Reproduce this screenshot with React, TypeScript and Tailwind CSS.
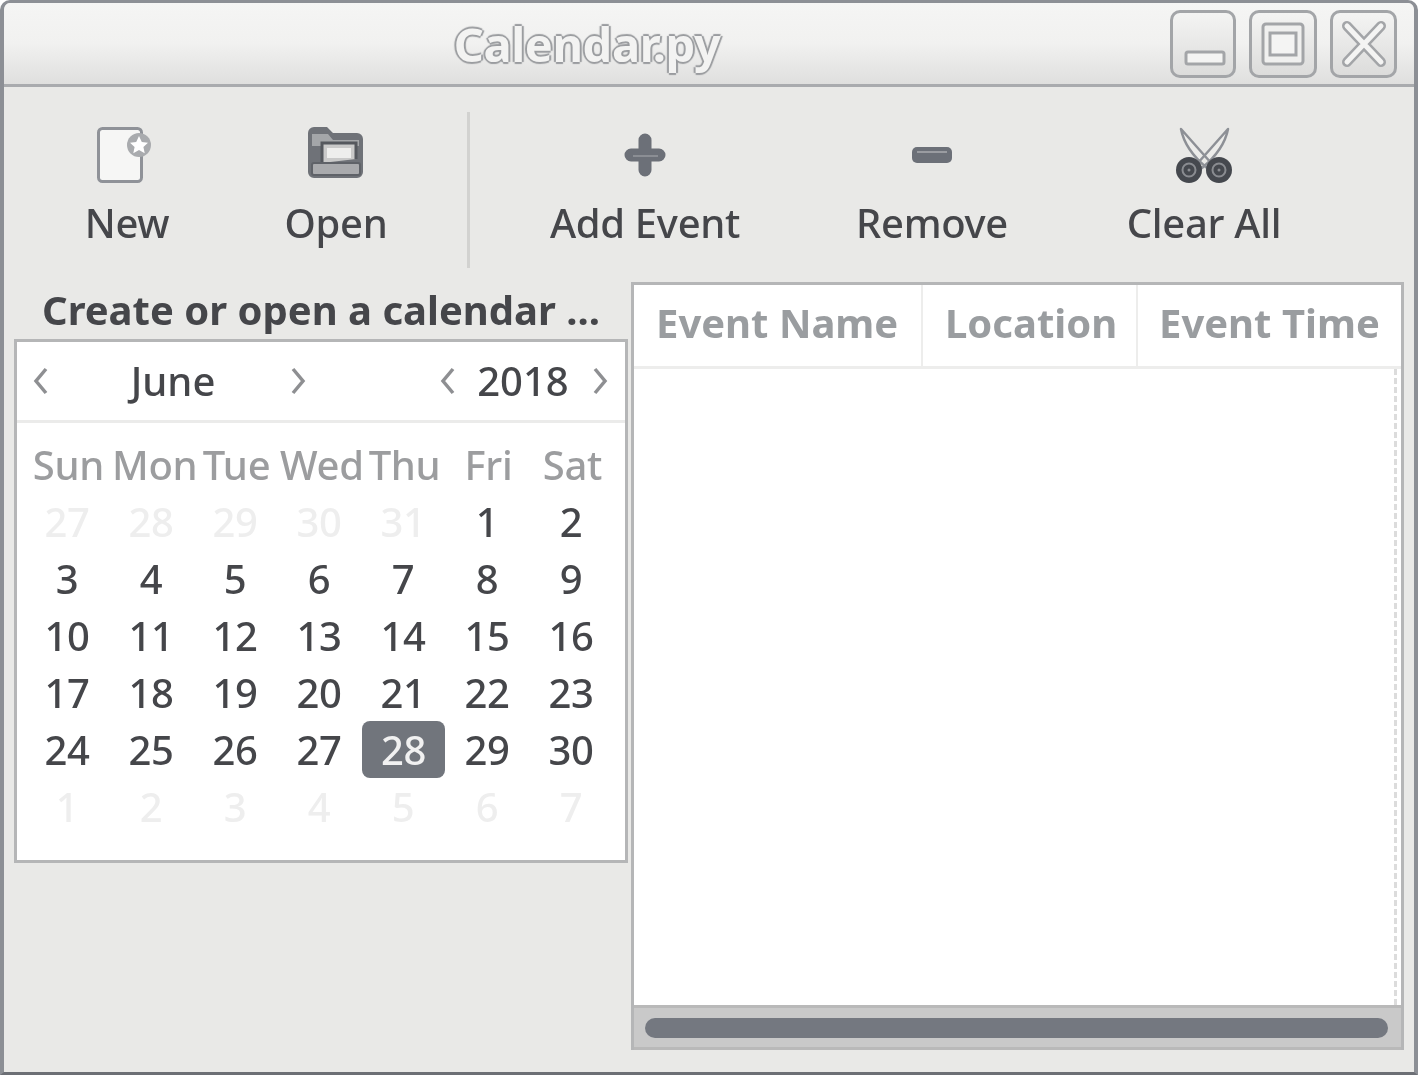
import type { ReactNode } from "react";

const weeks = [
  ["27", "28", "29", "30", "31", "1", "2"],
  ["3", "4", "5", "6", "7", "8", "9"],
  ["10", "11", "12", "13", "14", "15", "16"],
  ["17", "18", "19", "20", "21", "22", "23"],
  ["24", "25", "26", "27", "28", "29", "30"],
  ["1", "2", "3", "4", "5", "6", "7"],
];
const dayNames = ["Sun", "Mon", "Tue", "Wed", "Thu", "Fri", "Sat"];

function NewIcon() {
  return (
    <svg className="overflow-visible" width="56" height="56" viewBox="3 0 56 56" fill="none">
      <rect x="2.500" y="1.500" width="43" height="53" rx="4" fill="#f6f6f5" stroke="#8f9298" strokeWidth="3" />
      <circle cx="43" cy="18" r="12" fill="#a9abae" />
      <path d="M43 9l2.800 6 6.200.8-4.600 4.300 1.300 6.200-5.700-3.200-5.700 3.200 1.300-6.200-4.600-4.300 6.200-.8z" fill="#ffffff" />
    </svg>
  );
}

function OpenIcon() {
  return (
    <svg className="overflow-visible" width="56" height="56" viewBox="1 0 56 56" fill="none">
      <path d="M1 6a6 6 0 0 1 6-6h13l6 6h24a6 6 0 0 1 6 6v33a6 6 0 0 1-6 6H7a6 6 0 0 1-6-6z" fill="#6f7278" />
      <path d="M5 7h16l5 6h26v6H5z" fill="#a4a6a9" />
      <path d="M15 36V16h34v16" fill="#c9c9c9" stroke="#55585e" strokeWidth="3" />
      <rect x="20" y="21" width="24" height="10" fill="#eeeeed" />
      <rect x="5" y="36" width="48" height="12" rx="2" fill="#a9aaad" stroke="#5f6268" strokeWidth="2" />
    </svg>
  );
}

function PlusIcon() {
  return (
    <svg width="56" height="56" viewBox="0 0 56 56" fill="none">
      <path d="M28 13v30M14 28h28" stroke="#6c7078" strokeWidth="13" strokeLinecap="round" />
      <path d="M16 29h25" stroke="#8b8e94" strokeWidth="2" />
    </svg>
  );
}

function MinusIcon() {
  return (
    <svg width="56" height="56" viewBox="0 0 56 56" fill="none">
      <rect x="8" y="20" width="40" height="16" rx="5" fill="#6c7078" />
      <path d="M13 25h30" stroke="#9a9ca1" strokeWidth="2" />
    </svg>
  );
}

function ScissorsIcon() {
  return (
    <svg width="56" height="56" viewBox="0 0 56 56" fill="none">
      <path d="M5 2l31 35-5 4C19 31 8 18 5 2zM52 2L21 37l5 4C38 31 49 18 52 2z" fill="#ececea" stroke="#8d9096" strokeWidth="2.500" strokeLinejoin="round" />
      <circle cx="13" cy="43" r="13" fill="#45484e" />
      <circle cx="43" cy="43" r="13" fill="#45484e" />
      <circle cx="13" cy="43" r="6.500" stroke="#8a8c91" strokeWidth="2" />
      <circle cx="43" cy="43" r="6.500" stroke="#8a8c91" strokeWidth="2" />
      <circle cx="13" cy="43" r="1.500" fill="#8a8c91" />
      <circle cx="43" cy="43" r="1.500" fill="#8a8c91" />
    </svg>
  );
}

function ToolButton({ icon, label, width }: { icon: ReactNode; label: string; width: string }) {
  return (
    <div className={`flex flex-col items-center pt-[40px] ${width}`}>
      <div className="blur-[0.6px]">{icon}</div>
      <span className="mt-[14px] text-[40px] font-medium leading-[52px] tracking-[-0.3px] text-[#45464a] blur-[0.7px]">{label}</span>
    </div>
  );
}

function Chevron({ dir }: { dir: "left" | "right" }) {
  return (
    <svg className="blur-[0.5px]" width="16" height="30" viewBox="0 0 16 30" fill="none">
      <path
        d={dir === "left" ? "M13 3L3 15l10 12" : "M3 3l10 12L3 27"}
        stroke="#8e8f92"
        strokeWidth="3.500"
      />
    </svg>
  );
}

function WinButton({ children, className }: { children: ReactNode; className: string }) {
  return (
    <div className={`flex h-[68px] items-center justify-center rounded-[10px] border-[3px] border-[#a3a5a8] bg-gradient-to-b from-[#f4f4f3] to-[#dcdcdb] blur-[0.5px] ${className}`}>
      <svg width="56" height="56" viewBox="0 0 56 56" fill="none">
        {children}
      </svg>
    </div>
  );
}

export default function App() {
  return (
    <div className="flex h-[1075px] w-[1418px] flex-col overflow-hidden rounded-t-[10px] border-x-[4px] border-t-[3px] border-b-[3px] border-x-[#8c8f95] border-t-[#8c8f95] border-b-[#6c6f75] bg-[#e9e9e7] font-['Noto_Sans',sans-serif]">
      <div className="flex h-[84px] shrink-0 border-b-[3px] border-[#a9abae] bg-gradient-to-b from-[#f5f5f4] via-[#f1f1f0] to-[#dfdfde]">
        <div className="flex flex-1 items-center justify-center pt-[1px] text-[47px] font-bold leading-none tracking-[-0.4px] text-[#f3f3f2] blur-[0.5px] [text-shadow:-2px_0_1px_#9a9c9f,2px_0_1px_#9a9c9f,0_-2px_1px_#9a9c9f,0_2px_1px_#9a9c9f]">
          Calendar.py
        </div>
        <div className="mr-[17px] mt-[7px] flex gap-[13px]">
          <WinButton className="w-[66px]">
            <rect x="11" y="36" width="38" height="12" rx="2" fill="#f4f4f3" stroke="#a3a5a8" strokeWidth="3" />
          </WinButton>
          <WinButton className="w-[68px]">
            <rect x="8" y="8" width="40" height="40" rx="3" fill="#f0f0ef" stroke="#a3a5a8" strokeWidth="3" />
            <rect x="15" y="17" width="26" height="22" fill="#f4f4f3" stroke="#a3a5a8" strokeWidth="3" />
          </WinButton>
          <WinButton className="w-[67px]">
            <path d="M11 10l34 36M45 10L11 46" stroke="#a3a5a8" strokeWidth="10" strokeLinecap="round" />
            <path d="M11 10l34 36M45 10L11 46" stroke="#f4f4f3" strokeWidth="5" strokeLinecap="round" />
          </WinButton>
        </div>
      </div>

      <div className="flex h-[195px] shrink-0 items-start pl-[18px]">
        <ToolButton icon={<NewIcon />} label="New" width="w-[210px]" />
        <ToolButton icon={<OpenIcon />} label="Open" width="w-[208px]" />
        <div className="ml-[27px] mt-[25px] h-[156px] w-[3px] bg-[#d2d2d0]" />
        <ToolButton icon={<PlusIcon />} label="Add Event" width="w-[306px] ml-[22px]" />
        <ToolButton icon={<MinusIcon />} label="Remove" width="w-[268px]" />
        <ToolButton icon={<ScissorsIcon />} label="Clear All" width="w-[276px]" />
      </div>

      <div className="flex flex-1 items-start gap-[3px] pl-[10px]">
        <div className="flex w-[614px] flex-col">
          <div className="flex h-[57px] items-center justify-center pb-[2px] text-[40px] font-bold leading-none text-[#45464a] blur-[0.6px]">
            Create or open a calendar ...
          </div>
          <div className="h-[524px] border-[3px] border-[#b5b6b7] bg-white">
            <div className="flex h-[81px] items-center border-b-[3px] border-[#ebebea] pl-[16px]">
              <Chevron dir="left" />
              <span className="w-[241px] pl-[7px] text-center text-[40px] font-medium text-[#45464a] blur-[0.6px]">June</span>
              <Chevron dir="right" />
              <div className="w-[134px]" />
              <Chevron dir="left" />
              <span className="w-[134px] text-center text-[40px] font-medium text-[#45464a] blur-[0.6px]">2018</span>
              <div className="ml-[2px]">
                <Chevron dir="right" />
              </div>
            </div>
            <div className="grid grid-cols-[repeat(7,84px)] pl-[8px] pt-[13px] text-center text-[40px] font-medium leading-[57px] tracking-[-0.3px] blur-[0.6px]">
              {dayNames.map((d) => (
                <div key={d} className="whitespace-nowrap pl-[3px] text-[#9c9d9f]">
                  {d}
                </div>
              ))}
              {weeks.map((week, w) =>
                week.map((d, i) => {
                  const muted = (w === 0 && i < 5) || w === 5;
                  const selected = w === 4 && i === 4;
                  return (
                    <div
                      key={`${w}-${i}`}
                      className={
                        selected
                          ? "ml-[1px] rounded-[8px] bg-[#71757c] text-[#f1f1f1]"
                          : muted
                            ? "text-[#eeeeee]"
                            : "text-[#45464a]"
                      }
                    >
                      {d}
                    </div>
                  );
                }),
              )}
            </div>
          </div>
        </div>

        <div className="flex h-[768px] w-[773px] flex-col border-[3px] border-b-0 border-[#b5b6b7] bg-white">
          <div className="flex h-[84px] shrink-0 border-b-[3px] border-[#ededec] text-[40px] font-bold leading-[76px] text-[#9a9da0]">
            <div className="w-[289px] border-r-[2px] border-[#ededec] pl-[22px]"><span className="blur-[0.5px]">Event Name</span></div>
            <div className="w-[215px] border-r-[2px] border-[#ededec] pl-[22px]"><span className="blur-[0.5px]">Location</span></div>
            <div className="pl-[21px]"><span className="blur-[0.5px]">Event Time</span></div>
          </div>
          <div className="flex flex-1 justify-end pr-[4px]">
            <div className="w-0 border-r-[3px] border-dashed border-[#dcdcdc]" />
          </div>
          <div className="flex h-[45px] shrink-0 items-center border-[3px] border-x-0 border-[#b9b9b9] bg-[#c9c9c9] px-[11px]">
            <div className="h-[20px] w-[743px] rounded-full bg-[#747880]" />
          </div>
        </div>
      </div>
    </div>
  );
}
